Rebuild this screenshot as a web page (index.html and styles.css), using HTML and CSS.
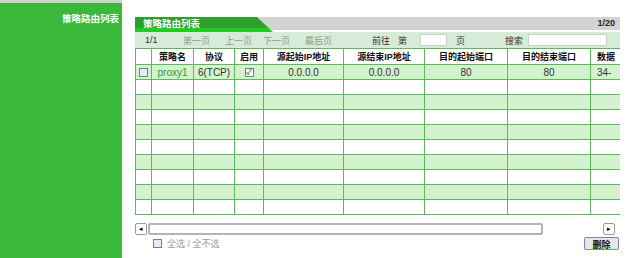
FILE: index.html
```html
<!DOCTYPE html>
<html lang="zh-CN">
  <head>
    <meta charset="UTF-8" />
    <title>策略路由列表</title>
    <link rel="stylesheet" href="styles.css">
  </head>
  <body>
    <div class="page">
      <div class="sidebar">
        <div class="side-title">策略路由列表</div>
      </div>

      <div class="main">
        <div class="panel-head">
          <div class="tab">策略路由列表</div>
          <div class="page-total">1/20</div>
        </div>

        <div class="toolbar">
          <span></span>
          <span class="count">1/1</span>
          <span class="pager">第一页</span>
          <span class="pager">上一页</span>
          <span class="pager">下一页</span>
          <span class="pager">最后页</span>
          <span>前往</span>
          <span>第</span>
          <input type="text" class="box" />
          <span></span>
          <span>页</span>
          <span>搜索</span>
          <input type="text" class="box" />
        </div>

        <div class="table-wrap">
          <table class="list">
            <colgroup>
              <col style="width: 16px" />
              <col style="width: 42px" />
              <col style="width: 41px" />
              <col style="width: 29px" />
              <col style="width: 80px" />
              <col style="width: 81px" />
              <col style="width: 83px" />
              <col style="width: 83px" />
              <col style="width: 60px" />
            </colgroup>
            <thead>
              <tr>
                <th></th>
                <th>策略名</th>
                <th>协议</th>
                <th>启用</th>
                <th>源起始IP地址</th>
                <th>源结束IP地址</th>
                <th>目的起始端口</th>
                <th>目的结束端口</th>
                <th class="cut">数据</th>
              </tr>
            </thead>
            <tbody>
              <tr class="alt">
                <td><span class="chk"></span></td>
                <td class="name">proxy1</td>
                <td>6(TCP)</td>
                <td><span class="chk on">✓</span></td>
                <td>0.0.0.0</td>
                <td>0.0.0.0</td>
                <td>80</td>
                <td>80</td>
                <td class="cut">34-</td>
              </tr>
              <tr><td></td><td></td><td></td><td></td><td></td><td></td><td></td><td></td><td></td></tr>
              <tr class="alt"><td></td><td></td><td></td><td></td><td></td><td></td><td></td><td></td><td></td></tr>
              <tr><td></td><td></td><td></td><td></td><td></td><td></td><td></td><td></td><td></td></tr>
              <tr class="alt"><td></td><td></td><td></td><td></td><td></td><td></td><td></td><td></td><td></td></tr>
              <tr><td></td><td></td><td></td><td></td><td></td><td></td><td></td><td></td><td></td></tr>
              <tr class="alt"><td></td><td></td><td></td><td></td><td></td><td></td><td></td><td></td><td></td></tr>
              <tr><td></td><td></td><td></td><td></td><td></td><td></td><td></td><td></td><td></td></tr>
              <tr class="alt"><td></td><td></td><td></td><td></td><td></td><td></td><td></td><td></td><td></td></tr>
              <tr><td></td><td></td><td></td><td></td><td></td><td></td><td></td><td></td><td></td></tr>
            </tbody>
          </table>
        </div>

        <div class="hscroll">
          <div class="arrow">&#9666;</div>
          <div class="thumb"></div>
          <div class="arrow">&#9656;</div>
        </div>

        <div class="footer">
          <span class="chk"></span>
          <span class="select-all">全选 / 全不选</span>
          <button class="del">删除</button>
        </div>
      </div>
    </div>
  </body>
</html>
```

FILE: styles.css
```css
* {
  margin: 0;
  padding: 0;
  box-sizing: border-box;
  font-family: "Liberation Sans", "Noto Sans CJK SC", sans-serif;
}

body {
  background: #fff;
  font-size: 9px;
  color: #333;
}

.page {
  display: flex;
  height: 258px;
}

.sidebar {
  width: 122px;
  background: #3ab83a;
  border-top: 3px solid #d2d2d2;
}

.side-title {
  color: #fff;
  font-weight: bold;
  font-size: 9.5px;
  text-align: right;
  padding: 8px 3px 0 0;
}

.main {
  width: 485px;
  margin-left: 13px;
  padding-top: 17px;
}

/* header: green tab + grey band */
.panel-head {
  display: flex;
  height: 15px;
  background: linear-gradient(#d3d3d3, #d3d3d3) no-repeat top / 100% 13px;
}

.tab {
  width: 138px;
  height: 15px;
  background: linear-gradient(#2e9e2e 0, #2e9e2e 11px, #1fcc1f 11px);
  clip-path: polygon(0 0, 122px 0, 138px 100%, 0 100%);
  color: #fff;
  font-weight: bold;
  font-size: 9.5px;
  line-height: 13px;
  padding-left: 8px;
}

.page-total {
  flex: 1;
  text-align: right;
  font-weight: bold;
  color: #222;
  line-height: 13px;
  padding-right: 5px;
}

/* pager row */
.toolbar {
  display: grid;
  grid-template-columns: 10px 38px 42px 38px 42px 67px 26px 22px 27px 9px 49px 23px 79px;
  align-items: center;
  height: 16px;
  background: #d6ecd8;
  color: #333;
}

.toolbar .pager {
  color: #8a9a8a;
}

.box {
  height: 12px;
  border: 1px solid #c8d4c8;
  background: #fff;
}

/* list table */
.table-wrap {
  width: 485px;
  overflow: hidden;
}

.list {
  width: 515px;
  table-layout: fixed;
  border-collapse: collapse;
}

.list th,
.list td {
  border: 1px solid #5cb85c;
  text-align: center;
  white-space: nowrap;
  overflow: hidden;
  height: 15px;
  padding: 0;
}

.list td {
  font-size: 10px;
}

.list th {
  height: 16px;
  font-weight: bold;
  color: #111;
  background: #fff;
}

.list th.cut,
.list td.cut {
  text-align: left;
  padding-left: 6px;
  border-right: none;
}

.list tr.alt td {
  background: #d4f2ce;
}

.list td.name {
  color: #2f9a3a;
}

.chk {
  display: inline-block;
  width: 9px;
  height: 9px;
  border: 1px solid #6a7fa8;
  background: #e6ecf4;
  vertical-align: middle;
  font-size: 8px;
  line-height: 7px;
  color: #2c9a2c;
  font-weight: bold;
}

.chk.on {
  background: #fff;
}

/* horizontal scrollbar */
.hscroll {
  display: flex;
  height: 12px;
  margin-top: 8px;
}

.arrow {
  width: 12px;
  border: 1px solid #9a9a9a;
  border-radius: 2px;
  background: #fff;
  font-size: 7px;
  line-height: 10px;
  text-align: center;
  color: #000;
}

.thumb {
  width: 395px;
  margin-left: 1px;
  margin-right: 60px;
  border: 2px solid #b4b4b4;
  border-radius: 2px;
  background: #fff;
}

.footer {
  display: flex;
  align-items: center;
  margin-top: 2px;
  padding-left: 18px;
}

.select-all {
  color: #9a9a9a;
  margin-left: 5px;
}

.del {
  margin-left: auto;
  margin-right: 1px;
  width: 35px;
  height: 13px;
  border: 1px solid #9a72b8;
  border-bottom-color: #4cc04c;
  border-radius: 2px;
  background: #e6e6e6;
  font-size: 9px;
  font-weight: bold;
  color: #111;
}
```
